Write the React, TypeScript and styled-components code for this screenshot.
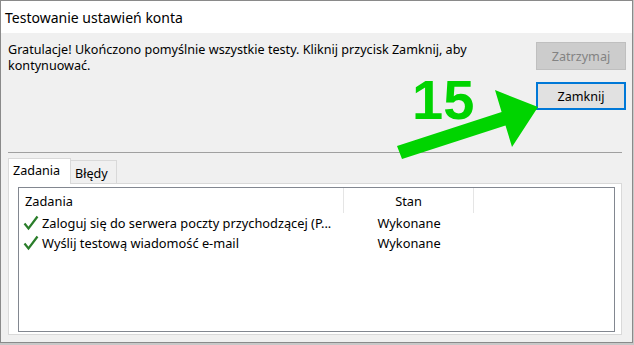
import React from 'react'
import styled, { createGlobalStyle } from 'styled-components'

const GlobalStyle = createGlobalStyle`
  html, body {
    margin: 0;
    padding: 0;
    background: #c8c8c8;
  }
  body {
    font-family: "Noto Sans", "Open Sans", sans-serif;
  }
`

const Window = styled.div`
  position: relative;
  box-sizing: border-box;
  width: 633px;
  height: 343px;
  border: 1px solid #8a8a8a;
  background: #f0f0f0;
  display: flex;
  flex-direction: column;
  color: #000;
`

const TitleBar = styled.div`
  height: 32px;
  background: #fff;
  padding-left: 4px;
  display: flex;
  align-items: center;
  font-size: 14px;
`

const Body = styled.div`
  flex: 1;
  display: flex;
  flex-direction: column;
  padding: 9px 10px 7px 7px;
  min-height: 0;
`

const TopRow = styled.div`
  display: grid;
  grid-template-columns: 1fr 90px;
  column-gap: 20px;
  margin-right: -4px;
`

const Message = styled.div`
  font-size: 12.6px;
  line-height: 16px;
`

const ButtonColumn = styled.div`
  display: flex;
  flex-direction: column;
  gap: 12px;
`

const DialogButton = styled.button<{ $variant?: 'default' | 'disabled' }>`
  box-sizing: border-box;
  width: 90px;
  height: 28px;
  font-family: inherit;
  font-size: 12.6px;
  padding: 0;
  color: ${(p) => (p.$variant === 'disabled' ? '#838383' : '#000')};
  background: ${(p) => (p.$variant === 'disabled' ? '#cccccc' : '#e1e1e1')};
  border: ${(p) =>
    p.$variant === 'disabled' ? '1px solid #bfbfbf' : '2px solid #0078d7'};
`

const Separator = styled.div`
  height: 1px;
  background: #a0a0a0;
  margin-top: 42px;
`

const TabStrip = styled.div`
  display: flex;
  align-items: flex-end;
  height: 25px;
  margin-top: 5px;
`

const Tab = styled.div<{ $active?: boolean }>`
  box-sizing: border-box;
  display: flex;
  align-items: center;
  font-size: 12.6px;
  height: ${(p) => (p.$active ? '26px' : '23px')};
  padding: ${(p) => (p.$active ? '0 0 2px 4px' : '2px 0 0 4px')};
  width: ${(p) => (p.$active ? '63px' : '46px')};
  background: ${(p) => (p.$active ? '#fff' : '#f0f0f0')};
  border: 1px solid #d9d9d9;
  border-bottom: none;
  border-left: ${(p) => (p.$active ? '1px solid #d9d9d9' : 'none')};
  margin-bottom: ${(p) => (p.$active ? '-1px' : '0')};
  position: relative;
  z-index: ${(p) => (p.$active ? 1 : 0)};
`

const TabPanel = styled.div`
  flex: 1;
  display: flex;
  background: #fff;
  border: 1px solid #d9d9d9;
  padding: 3px 6px 2px 9px;
`

const ListBox = styled.div`
  flex: 1;
  border: 1px solid #828790;
  background: #fff;
  font-size: 12.8px;
`

const Columns = `
  display: grid;
  grid-template-columns: 325px 130px 1fr;
`

const HeaderRow = styled.div`
  ${Columns}
  height: 25px;
`

const HeaderCell = styled.div<{ $center?: boolean; $last?: boolean }>`
  display: flex;
  align-items: center;
  justify-content: ${(p) => (p.$center ? 'center' : 'flex-start')};
  padding-left: ${(p) => (p.$center ? '0' : '6px')};
  border-right: ${(p) => (p.$last ? 'none' : '1px solid #e5e5e5')};
`

const Row = styled.div`
  ${Columns}
  height: 20px;
`

const Cell = styled.div<{ $center?: boolean }>`
  display: flex;
  align-items: center;
  justify-content: ${(p) => (p.$center ? 'center' : 'flex-start')};
  padding-left: ${(p) => (p.$center ? '0' : '4px')};
  gap: 3px;
  white-space: nowrap;
  overflow: hidden;
`

const StepNumber = styled.div`
  position: absolute;
  left: 411px;
  top: 71px;
  font-family: "Liberation Sans", Arial, sans-serif;
  font-weight: bold;
  font-size: 56px;
  line-height: 1;
  color: #00d400;
`

const ArrowLayer = styled.svg`
  position: absolute;
  left: -1px;
  top: -1px;
  pointer-events: none;
`

function Check() {
  return (
    <svg width="16" height="16" viewBox="0 0 16 16">
      <path
        d="M1.5 8.5 L5.5 13.5 L14.5 1.5"
        fill="none"
        stroke="#2a7d2a"
        strokeWidth="2.2"
      />
    </svg>
  )
}

const tasks = [
  'Zaloguj się do serwera poczty przychodzącej (P...',
  'Wyślij testową wiadomość e-mail',
]

export default function App() {
  return (
    <>
      <GlobalStyle />
      <Window>
        <TitleBar>Testowanie ustawień konta</TitleBar>
        <Body>
          <TopRow>
            <Message>
              Gratulacje! Ukończono pomyślnie wszystkie testy. Kliknij przycisk
              Zamknij, aby
              <br />
              kontynuować.
            </Message>
            <ButtonColumn>
              <DialogButton $variant="disabled">Zatrzymaj</DialogButton>
              <DialogButton $variant="default">Zamknij</DialogButton>
            </ButtonColumn>
          </TopRow>

          <Separator />

          <TabStrip>
            <Tab $active>Zadania</Tab>
            <Tab>Błędy</Tab>
          </TabStrip>

          <TabPanel>
            <ListBox>
              <HeaderRow>
                <HeaderCell>Zadania</HeaderCell>
                <HeaderCell $center>Stan</HeaderCell>
                <HeaderCell $last />
              </HeaderRow>
              {tasks.map((task) => (
                <Row key={task}>
                  <Cell>
                    <Check />
                    {task}
                  </Cell>
                  <Cell $center>Wykonane</Cell>
                  <Cell />
                </Row>
              ))}
            </ListBox>
          </TabPanel>
        </Body>

        <StepNumber>15</StepNumber>
        <ArrowLayer width="633" height="343" viewBox="0 0 633 343">
          <polygon
            points="397,146 501.6,112 495,90 538,107 512,147 505.5,125.4 402,159"
            fill="#00d400"
          />
        </ArrowLayer>
      </Window>
    </>
  )
}
